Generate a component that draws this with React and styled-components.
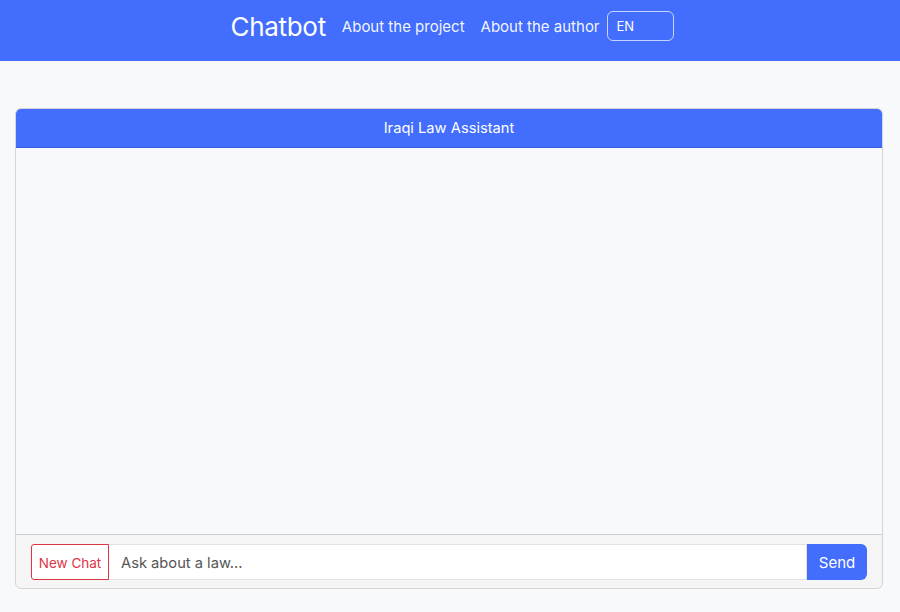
import React from 'react'
import styled, { createGlobalStyle } from 'styled-components'

const GlobalStyle = createGlobalStyle`
  * { box-sizing: border-box; }
  body {
    margin: 0;
    background: #f8f9fa;
    font-family: Inter, "Noto Sans", "Liberation Sans", sans-serif;
  }
`

function App() {
  return (
    <>
      <GlobalStyle />
      <NavBar>
        <Brand>Chatbot</Brand>
        <NavLink>About the project</NavLink>
        <NavLink>About the author</NavLink>
        <LangSelect>EN</LangSelect>
      </NavBar>

      <ChatCard>
        <CardHeader>Iraqi Law Assistant</CardHeader>
        <Messages />
        <CardFooter>
          <InputGroup>
            <NewChatButton>New Chat</NewChatButton>
            <Question placeholder="Ask about a law..." />
            <SendButton>Send</SendButton>
          </InputGroup>
        </CardFooter>
      </ChatCard>
    </>
  )
}

export default App

const NavBar = styled.nav`
  height: 61px;
  background: #426dfd;
  display: flex;
  align-items: center;
  justify-content: center;
  padding: 0 0 9px 4px;
  color: white;
`

const Brand = styled.span`
  font-size: 26px;
  margin-right: 8px;
  letter-spacing: -0.3px;
`

const NavLink = styled.span`
  font-size: 15px;
  padding: 0 8px;
  color: rgba(255, 255, 255, 0.95);
`

const LangSelect = styled.div`
  width: 67px;
  height: 30px;
  margin-left: -1px;
  border: 1px solid rgba(255, 255, 255, 0.7);
  border-radius: 6px;
  font-size: 13px;
  display: flex;
  align-items: center;
  padding-left: 9px;
`

const ChatCard = styled.div`
  margin: 47px 17px 0 15px;
  border: 1px solid #d4d4d4;
  border-radius: 6px;
  overflow: hidden;
  background: #f5f5f5;
`

const CardHeader = styled.div`
  height: 39px;
  background: #426dfd;
  color: white;
  font-size: 14.7px;
  display: flex;
  align-items: center;
  justify-content: center;
  border-bottom: 1px solid #3a5fd8;
`

const Messages = styled.div`
  height: 387px;
  background: #f8f9fa;
  border-bottom: 1px solid #d0d0d0;
`

const CardFooter = styled.div`
  padding: 9px 15px 8px 15px;
`

const InputGroup = styled.div`
  display: flex;
  height: 36px;
`

const NewChatButton = styled.button`
  width: 78px;
  border: 1px solid #dc3545;
  border-radius: 3px 0 0 3px;
  background: white;
  color: #dc3545;
  font-family: inherit;
  font-size: 13.5px;
  padding: 2px 0 0;
`

const Question = styled.input`
  flex: 1;
  border: 1px solid #e2e2e2;
  border-left: none;
  background: white;
  font-family: inherit;
  font-size: 14.7px;
  padding: 1px 12px 0;
  outline: none;

  &::placeholder {
    color: #555;
  }
`

const SendButton = styled.button`
  width: 60px;
  border: none;
  border-radius: 0 6px 6px 0;
  background: #426dfd;
  color: white;
  font-family: inherit;
  font-size: 15px;
  padding: 0;
`
